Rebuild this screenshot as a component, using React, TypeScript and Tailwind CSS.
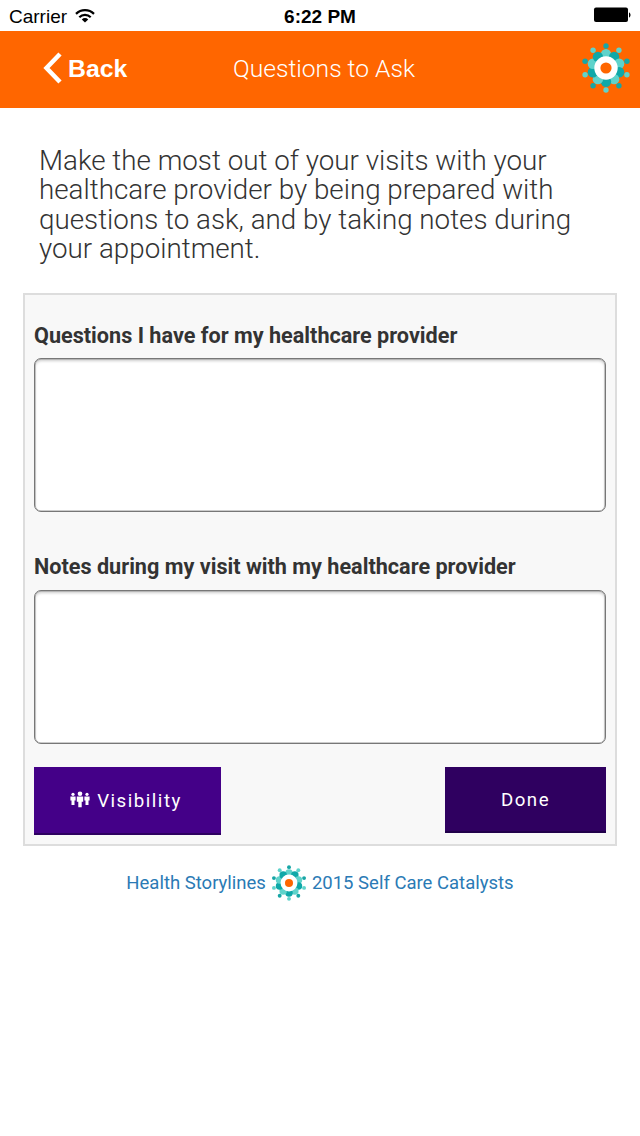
import { clsx } from "clsx";

const SPOKES = Array.from({ length: 10 }, (_, i) => {
  const angle = (i * 36 * Math.PI) / 180;
  return { x: Math.sin(angle), y: -Math.cos(angle), even: i % 2 === 0 };
});

function Logo({ className }: { className?: string }) {
  return (
    <svg viewBox="-25 -25 50 50" className={clsx("shrink-0", className)} aria-hidden="true">
      {SPOKES.map((s, i) => (
        <circle key={i} cx={s.x * 22} cy={s.y * 22} r="2.7" fill={s.even ? "#17a6a6" : "#5fd3cb"} />
      ))}
      {SPOKES.map((s, i) => (
        <circle key={i} cx={s.x * 13.8} cy={s.y * 13.8} r="5.2" fill={s.even ? "#5fd3cb" : "#0fa8a8"} />
      ))}
      <circle r="11.7" fill="#fff" />
      <circle r="5.6" fill="#ff6600" />
    </svg>
  );
}

function WifiIcon() {
  return (
    <svg width="20" height="14" viewBox="0 0 20 14" fill="none" stroke="#000" strokeWidth="2.2" className="-mt-[3px]">
      <path d="M1 4.9a12.8 12.8 0 0 1 18 0" />
      <path d="M4.3 8.2a8.1 8.1 0 0 1 11.4 0" />
      <path d="M10 13.6 6.8 10.4a4.5 4.5 0 0 1 6.4 0z" fill="#000" stroke="none" />
    </svg>
  );
}

function PeopleIcon() {
  return (
    <svg width="20" height="17" viewBox="0 0 20 17" fill="#fff" className="-mt-1">
      <circle cx="3" cy="3.3" r="1.6" />
      <path d="M.4 5.5h5.2v4H4.500v4.500H1.500V9.500H.4z" />
      <circle cx="17" cy="3.3" r="1.6" />
      <path d="M14.400 5.500h5.200v4h-1.100v4.500h-3V9.500h-1.100z" />
      <circle cx="10" cy="2.700" r="2.300" />
      <path d="M6.800 5.500h6.400v5.300h-1.500v5.400H8.300v-5.400H6.800z" />
    </svg>
  );
}

function Field({ label, className }: { label: string; className?: string }) {
  return (
    <label className={clsx("flex flex-col gap-2.5", className)}>
      <span className="text-[21.63px] leading-6 font-bold whitespace-nowrap">{label}</span>
      <textarea className="h-[154px] w-full resize-none rounded-[7px] border border-[#777] bg-white shadow-[inset_0_0_0_0.5px_#999,inset_0_2px_3px_rgba(0,0,0,0.2)] outline-none" />
    </label>
  );
}

export default function App() {
  return (
    <div className="min-h-[1136px] w-[640px] bg-white font-[Roboto,sans-serif] text-[#333]">
      <div className="grid h-[31px] grid-cols-3 items-center bg-white px-[9px] pt-[3px] font-['Liberation_Sans',Arial,sans-serif] text-[19px] text-black">
        <div className="flex items-center gap-2">
          <span>Carrier</span>
          <WifiIcon />
        </div>
        <span className="text-center font-bold">6:22 PM</span>
        <svg width="38" height="16" viewBox="0 0 38 16" className="-mt-1 justify-self-end">
          <rect x="1" y=".5" width="34" height="14.5" rx="2" />
          <path d="M36 5.5c2 .5 2 4.5 0 5z" />
        </svg>
      </div>

      <header className="grid h-[77px] grid-cols-[1fr_auto_1fr] items-center bg-[#ff6600] pr-[9px] pb-[3px] pl-[17px] text-white">
        <button className="ml-[26px] flex items-center gap-1.5 justify-self-start font-['Liberation_Sans',Arial,sans-serif] text-[24.8px] font-bold">
          <svg width="19" height="32" viewBox="0 0 19 32" fill="none" stroke="#fff" strokeWidth="4.5">
            <path d="M17 2 3.5 16 17 30" />
          </svg>
          <span className="mt-px">Back</span>
        </button>
        <h1 className="pt-0.5 text-[24.6px] font-light">Questions to Ask</h1>
        <Logo className="size-[50px] justify-self-end" />
      </header>

      <p className="h-[185px] pt-[38px] pl-[39px] text-[27.78px] leading-[29.3px] font-light whitespace-nowrap">
        Make the most out of your visits with your
        <br />
        healthcare provider by being prepared with
        <br />
        questions to ask, and by taking notes during
        <br />
        your appointment.
      </p>

      <main className="mx-[23px] h-[553px] border-2 border-[#ddd] bg-[#f8f8f8] px-[9px] pt-[29px]">
        <Field label="Questions I have for my healthcare provider" />
        <Field label="Notes during my visit with my healthcare provider" className="mt-[43px] gap-[11px]" />
        <div className="mt-[23px] flex items-start justify-between text-[18.7px] text-white">
          <button className="flex h-[68px] w-[187px] items-center justify-center gap-[7px] border-b-2 border-[#2d0060] bg-[#440088] pt-0.5 pr-[3px] tracking-[1.5px]">
            <PeopleIcon />
            Visibility
          </button>
          <button className="h-[66px] w-[161px] border-b-2 border-[#20004a] bg-[#2f0060] pt-0.5 tracking-[1.5px]">
            Done
          </button>
        </div>
      </main>

      <footer className="flex h-[74px] items-center justify-center gap-[5px] text-[18.5px] text-[#2a7ab5]">
        <span className="mt-px">Health Storylines</span>
        <Logo className="size-9" />
        <span className="mt-px">2015 Self Care Catalysts</span>
      </footer>
    </div>
  );
}
